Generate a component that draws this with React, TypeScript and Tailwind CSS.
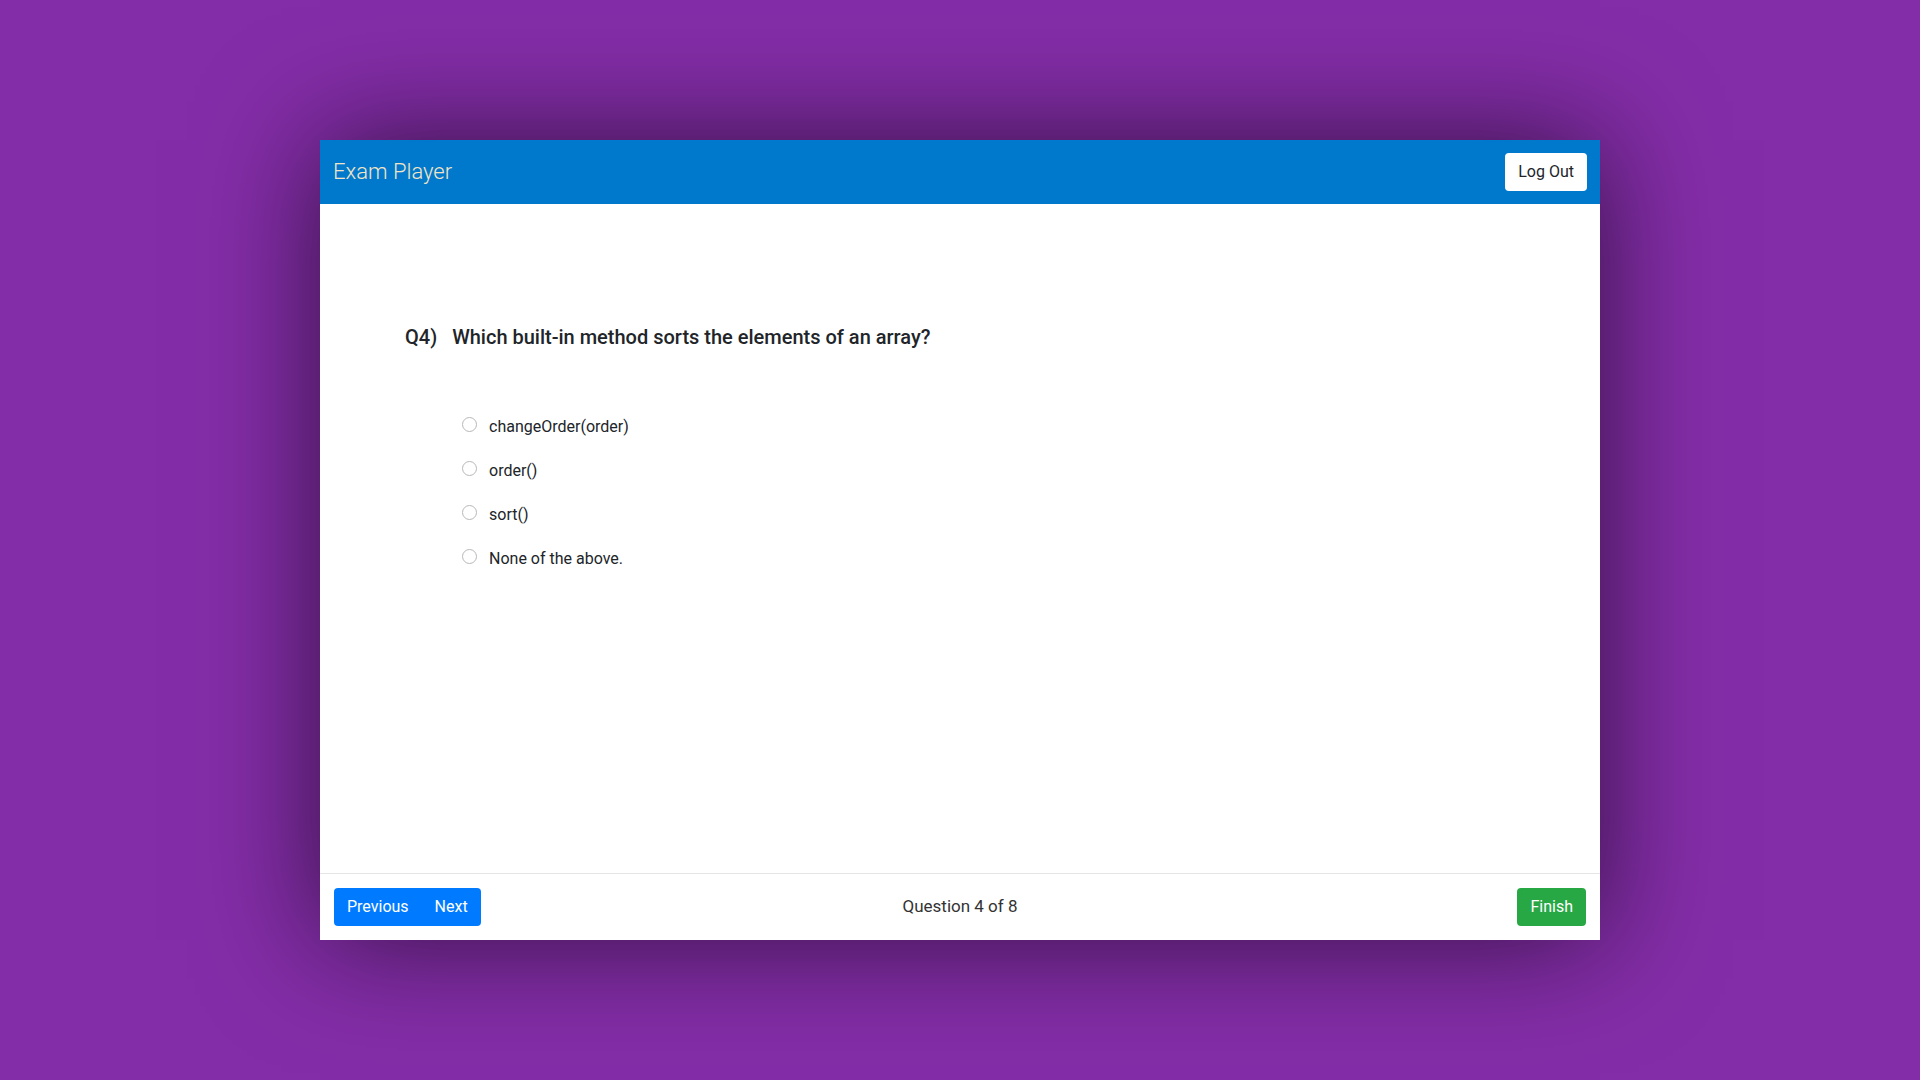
import React, { useState } from 'react';

const options = ['changeOrder(order)', 'order()', 'sort()', 'None of the above.'];

const App: React.FC = () => {
  const [selected, setSelected] = useState<number | null>(null);

  return (
    <div
      className="w-full h-screen flex items-center justify-center bg-[#842da8]"
      style={{ fontFamily: 'Roboto, "Liberation Sans", sans-serif' }}
    >
      <div className="w-[1280px] h-[800px] bg-white flex flex-col shadow-[0_0_110px_rgba(0,0,0,0.62)]">
        <header className="h-[64px] bg-[#0079cc] flex items-center justify-between pl-[13px] pr-[13px]">
          <span className="text-[22px] font-light text-[#f3e4c5] leading-none">Exam Player</span>
          <button className="h-[38px] px-[13px] bg-white rounded text-[16px] text-[#212529]">Log Out</button>
        </header>

        <main className="flex-1 pt-[119px] pl-[85px]">
          <h2 className="flex gap-[15px] text-[20px] font-medium text-[#212529] leading-[28px]">
            <span>Q4)</span>
            <span>Which built-in method sorts the elements of an array?</span>
          </h2>

          <div className="mt-[64px] pl-[57px] flex flex-col gap-[20px]">
            {options.map((opt, i) => (
              <label key={opt} className="flex items-center gap-[12px] h-[24px] text-[16px] text-[#212529] cursor-pointer">
                <span
                  onClick={() => setSelected(i)}
                  className={`w-[15px] h-[15px] rounded-full border -mt-[5px] ${selected === i ? 'border-[#007bff] bg-[#007bff]' : 'border-[#b8b8b8] bg-white'}`}
                />
                <span onClick={() => setSelected(i)}>{opt}</span>
              </label>
            ))}
          </div>
        </main>

        <footer className="border-t border-[#e5e5e5] px-[14px] py-[14px] grid grid-cols-3 items-center">
          <div className="justify-self-start flex bg-[#007bff] rounded h-[38px] text-[16px] text-white">
            <button className="px-[13px]">Previous</button>
            <button className="px-[13px]">Next</button>
          </div>
          <span className="justify-self-center text-[17px] text-[#333]">Question 4 of 8</span>
          <button className="justify-self-end h-[38px] px-[13px] bg-[#28a745] rounded text-[16px] text-white">Finish</button>
        </footer>
      </div>
    </div>
  );
};

export default App;
